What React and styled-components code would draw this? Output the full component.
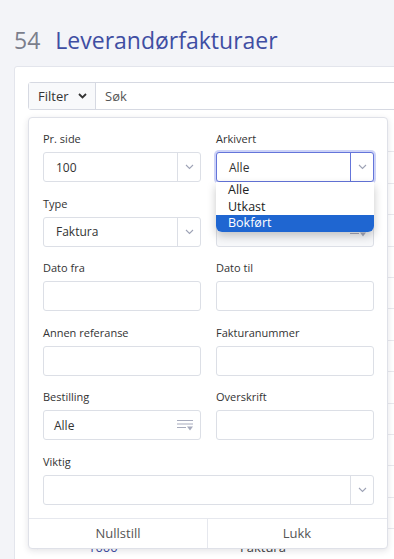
import React from 'react'
import styled, { createGlobalStyle } from 'styled-components'

const GlobalStyle = createGlobalStyle`
    html, body {
        margin: 0;
        height: 100%;
        overflow: hidden;
        background: #f3f4f8;
    }
    body {
        font-family: "Open Sans", "Noto Sans", sans-serif;
        color: #333;
    }
    * { box-sizing: border-box; }
`

const Page = styled.div`
    padding: 24px 0 0 14px;
`

const Title = styled.h1`
    margin: 0 0 10px;
    font-size: 23px;
    font-weight: 400;
    line-height: 32px;
    color: #3f4ea3;
    white-space: nowrap;

    .count {
        color: #7b7e8c;
        margin-right: 15px;
    }
`

const Card = styled.div`
    position: relative;
    width: 400px;
    height: 520px;
    padding: 15px 0 0 13px;
    background: #fff;
    border: 1px solid #e3e5ec;
    border-radius: 3px;
`

const FilterBar = styled.div`
    display: flex;
    height: 28px;
    border: 1px solid #d6d9e2;
    border-radius: 3px;
    font-size: 13px;
`

const FilterButton = styled.div`
    display: flex;
    align-items: center;
    gap: 9px;
    width: 67px;
    padding-left: 9px;
    background: #f8f9fb;
    border-right: 1px solid #d6d9e2;
    color: #333;
`

const Search = styled.div`
    display: flex;
    align-items: center;
    padding-left: 9px;
    color: #555;
`

const Table = styled.div`
    margin-top: 7px;
`

const Row = styled.div`
    display: grid;
    grid-template-columns: 60px 152px 150px 1fr;
    align-items: center;
    height: ${p => (p.$head ? '35.4px' : '31.4px')};
    padding-top: ${p => (p.$head ? 0 : 6)}px;
    border-bottom: 1px solid #e8e9ee;
    font-size: 13px;
`

const Cell = styled.div`
    display: flex;
    align-items: center;
    justify-content: ${p => (p.$end ? 'space-between' : 'flex-start')};
    padding-left: ${p => p.$pad || 0}px;
    padding-right: ${p => (p.$end ? 2 : 0)}px;
    color: ${p => (p.$link ? '#3f4ea3' : '#444')};
`

const Popover = styled.div`
    position: absolute;
    top: 50px;
    left: 13px;
    width: 360px;
    background: #fff;
    border: 1px solid #dfe1e8;
    border-radius: 4px;
    box-shadow: 0 2px 6px rgba(30, 35, 60, 0.12);
`

const Form = styled.div`
    display: grid;
    grid-template-columns: 158px 158px;
    column-gap: 15px;
    row-gap: 13.6px;
    padding: 13px 13px 13px 14px;
`

const Field = styled.div`
    position: relative;
    grid-column: ${p => (p.$wide ? '1 / span 2' : 'auto')};
`

const Label = styled.div`
    height: 16px;
    font-size: 11px;
    line-height: 16px;
    margin-bottom: 5px;
    color: #333;
    white-space: nowrap;
`

const Control = styled.div`
    display: flex;
    align-items: stretch;
    height: 30px;
    background: ${p => (p.$muted ? '#f7f8fa' : '#fff')};
    border: 1px solid ${p => (p.$focus ? '#6475da' : '#dcdfe6')};
    border-radius: 3px;
    box-shadow: ${p => (p.$focus ? '0 0 0 2px rgba(100, 118, 230, 0.32)' : 'none')};
    font-size: 12px;
    color: #333;
`

const Value = styled.div`
    flex: 1;
    display: flex;
    align-items: center;
    padding-left: ${p => p.$pad || 12}px;
`

const Caret = styled.div`
    width: 23px;
    display: flex;
    align-items: center;
    justify-content: center;
    border-left: 1px solid ${p => (p.$focus ? '#6475da' : '#dcdfe6')};
`

const IconSlot = styled.div`
    display: flex;
    align-items: center;
    padding-right: 7px;
`

const Options = styled.div`
    position: absolute;
    top: 100%;
    left: 0;
    right: 0;
    z-index: 2;
    background: #fff;
    border-radius: 0 0 6px 6px;
    box-shadow: 0 4px 10px rgba(0, 0, 0, 0.22);
    overflow: hidden;
    font-size: 12.5px;
`

const Option = styled.div`
    height: 16.7px;
    line-height: 16.7px;
    padding-left: 12px;
    background: ${p => (p.$active ? '#1f66d1' : '#fff')};
    color: ${p => (p.$active ? '#fff' : '#222')};
`

const Footer = styled.div`
    display: grid;
    grid-template-columns: 1fr 1fr;
    height: 30px;
    border-top: 1px solid #e6e8ee;
`

const FooterButton = styled.button`
    border: none;
    background: none;
    font-family: inherit;
    font-size: 13px;
    color: #555;
    border-right: 1px solid ${p => (p.$divider ? '#e6e8ee' : 'transparent')};
`

const Chevron = ({ color = '#9ea3b6', bold }) => (
    <svg width="9" height="6" viewBox="0 0 9 6">
        <polyline points="1,1 4.5,4.5 8,1" fill="none" stroke={color} strokeWidth={bold ? 1.8 : 1.1} />
    </svg>
)

const FilterIcon = () => (
    <svg width="16" height="11" viewBox="0 0 16 11">
        <g fill="#a7abbd">
            <rect x="0" y="0" width="16" height="1" />
            <rect x="0" y="3.5" width="16" height="1" />
            <rect x="0" y="7" width="9" height="1" />
            <polygon points="10,6.5 16,6.5 13,10.5" />
        </g>
    </svg>
)

const SortIcon = () => (
    <svg width="8" height="11" viewBox="0 0 8 11">
        <g fill="#c4c7d2">
            <polygon points="4,0 8,4 0,4" />
            <polygon points="4,11 8,7 0,7" />
        </g>
    </svg>
)

const SelectField = ({ label, value, focus, wide, children }) => (
    <Field $wide={wide}>
        <Label>{label}</Label>
        <Control $focus={focus}>
            <Value>{value}</Value>
            <Caret $focus={focus}><Chevron /></Caret>
        </Control>
        {children}
    </Field>
)

const LookupField = ({ label, value, muted }) => (
    <Field>
        <Label>{label}</Label>
        <Control $muted={muted}>
            <Value $pad={10}>{value}</Value>
            <IconSlot><FilterIcon /></IconSlot>
        </Control>
    </Field>
)

const TextField = ({ label }) => (
    <Field>
        <Label>{label}</Label>
        <Control />
    </Field>
)

const rows = ['1012', '1011', '1010', '1009', '1008', '1007', '1006', '1005', '1004', '1003', '1002', '1001', '1000']

const App = () => {
    return (
        <Page>
            <GlobalStyle />
            <Title><span className="count">54</span>Leverandørfakturaer</Title>
            <Card>
                <FilterBar>
                    <FilterButton>Filter <Chevron color="#333" bold /></FilterButton>
                    <Search>Søk</Search>
                </FilterBar>
                <Table>
                    <Row $head>
                        <Cell />
                        <Cell>Nr.</Cell>
                        <Cell $end>Type <SortIcon /></Cell>
                    </Row>
                    {rows.map(nr => (
                        <Row key={nr}>
                            <Cell $pad={5}><Chevron color="#b5b8c6" /></Cell>
                            <Cell $link>{nr}</Cell>
                            <Cell>Faktura</Cell>
                        </Row>
                    ))}
                </Table>
                <Popover>
                    <Form>
                        <SelectField label="Pr. side" value="100" />
                        <SelectField label="Arkivert" value="Alle" focus>
                            <Options>
                                <Option>Alle</Option>
                                <Option>Utkast</Option>
                                <Option $active>Bokført</Option>
                            </Options>
                        </SelectField>
                        <SelectField label="Type" value="Faktura" />
                        <LookupField label="Leverandør" value="" muted />
                        <TextField label="Dato fra" />
                        <TextField label="Dato til" />
                        <TextField label="Annen referanse" />
                        <TextField label="Fakturanummer" />
                        <LookupField label="Bestilling" value="Alle" />
                        <TextField label="Overskrift" />
                        <SelectField label="Viktig" value="" wide />
                    </Form>
                    <Footer>
                        <FooterButton $divider>Nullstill</FooterButton>
                        <FooterButton>Lukk</FooterButton>
                    </Footer>
                </Popover>
            </Card>
        </Page>
    )
}

export default App
